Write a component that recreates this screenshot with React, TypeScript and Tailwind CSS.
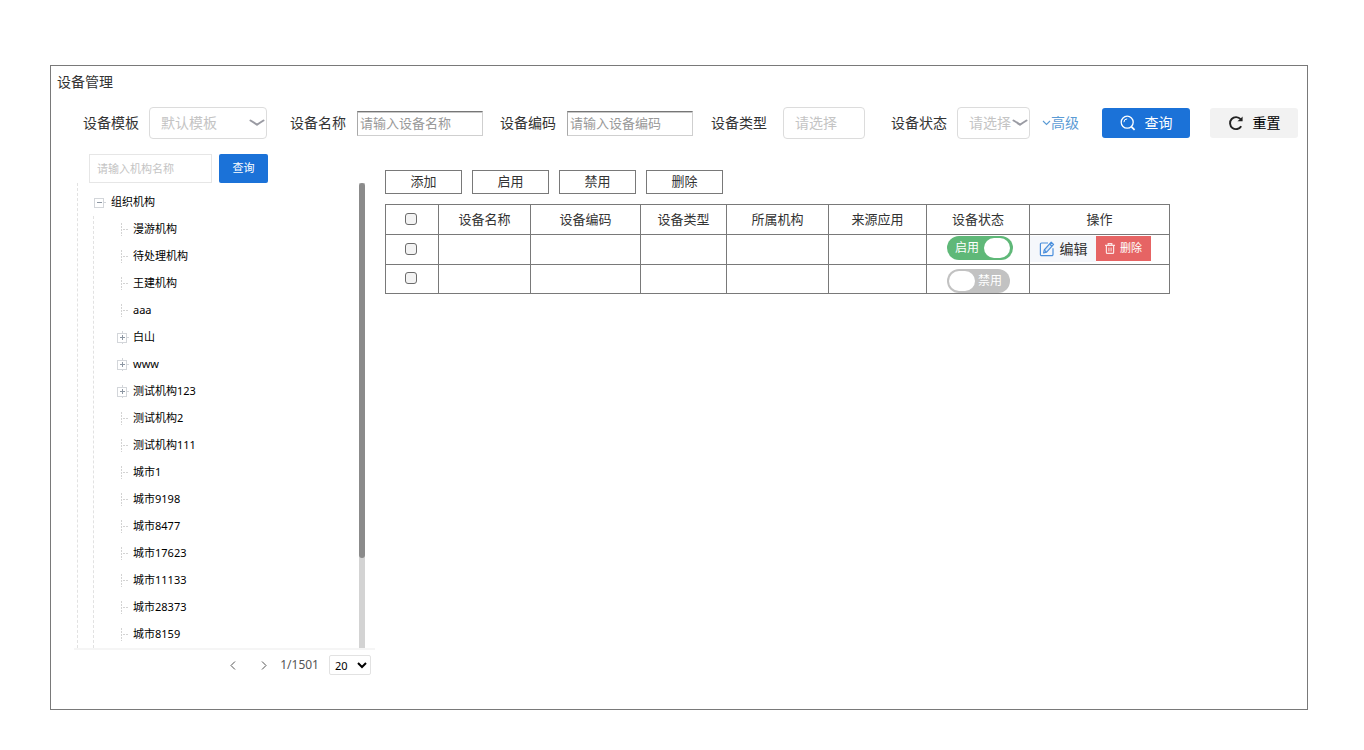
import { useState } from 'react'

type Org = { name: string; expandable?: boolean }

const orgs: Org[] = [
  { name: '漫游机构' },
  { name: '待处理机构' },
  { name: '王建机构' },
  { name: 'aaa' },
  { name: '白山', expandable: true },
  { name: 'www', expandable: true },
  { name: '测试机构123', expandable: true },
  { name: '测试机构2' },
  { name: '测试机构111' },
  { name: '城市1' },
  { name: '城市9198' },
  { name: '城市8477' },
  { name: '城市17623' },
  { name: '城市11133' },
  { name: '城市28373' },
  { name: '城市8159' },
]

const columns = ['设备名称', '设备编码', '设备类型', '所属机构', '来源应用', '设备状态', '操作']

function SelectArrow() {
  return (
    <svg
      className="pointer-events-none absolute right-[2px] top-[12px]"
      width="16"
      height="8"
      viewBox="0 0 16 8"
      fill="none"
      stroke="#9a9ba3"
      strokeWidth="2"
      strokeLinecap="round"
      strokeLinejoin="round"
    >
      <path d="M1.5 1.5 Q5 3.6 8 5.8 Q11 3.6 14.5 1.5" />
    </svg>
  )
}

function SearchIcon() {
  return (
    <svg width="16" height="16" viewBox="0 0 16 16" fill="none" stroke="currentColor" strokeWidth="1.3">
      <circle cx="7.2" cy="7.2" r="6" />
      <path d="M3.9 7.2a3.3 3.3 0 0 1 3.3-3.3" strokeWidth="1" />
      <path d="M11.5 11.8 14.6 14.8" strokeWidth="1.8" />
    </svg>
  )
}

function ResetIcon() {
  return (
    <svg width="16" height="16" viewBox="0 0 16 16" fill="none" stroke="#222" strokeWidth="1.9">
      <path d="M13.2 11.2A6 6 0 1 1 12.6 4.2" />
      <path d="M14.6 1.4V6.2H9.4L11.6 4.6Z" fill="#222" stroke="none" />
    </svg>
  )
}

function EditIcon() {
  return (
    <svg width="16" height="16" viewBox="0 0 16 16" fill="none" stroke="#4b8fdc" strokeWidth="1.2" strokeLinejoin="round">
      <path d="M9 2H2.6A1.2 1.2 0 0 0 1.4 3.2v10.2a1.2 1.2 0 0 0 1.2 1.2h10.2a1.2 1.2 0 0 0 1.2-1.2V7.2" />
      <path d="M12.2 1.2 14.6 3.4 7.6 11.2 4.6 12 5.2 9Z" fill="#dbe9f9" />
      <path d="M10.6 3 13 5.2M5.4 9.2 7.4 11" />
    </svg>
  )
}

function TrashIcon() {
  return (
    <svg width="10" height="11" viewBox="0 0 10 11" fill="none" stroke="#fbe3e3" strokeWidth="1.2">
      <path d="M0 2.4H10M3.2 2.2V.6H6.8V2.2" />
      <path d="M1.4 2.6V9.4a.9.9 0 0 0 .9.9H7.7a.9.9 0 0 0 .9-.9V2.6" />
      <path d="M3.9 4.6V8.4M6.1 4.6V8.4" strokeWidth="1" />
    </svg>
  )
}

function NodeMark({ sign }: { sign: 'plus' | 'minus' | 'leaf' }) {
  if (sign === 'leaf') {
    return (
      <svg width="12" height="14" viewBox="0 0 12 14" stroke="#d3d3d3" fill="none">
        <path d="M4.5 0V13" strokeDasharray="2 1" />
        <path d="M6 6.5H11" strokeDasharray="2 1" />
      </svg>
    )
  }
  return (
    <svg width="12" height="14" viewBox="0 0 12 14" stroke="#d3d6da" fill="none">
      {sign === 'plus' && <path d="M5.5 0V2M5.5 12V13" />}
      <path d="M10 6.5H12" />
      <rect x="0.5" y="2.5" width="9" height="9" fill="#fff" />
      <path d="M3 6.5H8" stroke="#8d97a3" />
      {sign === 'plus' && <path d="M5.5 4V9" stroke="#8d97a3" />}
    </svg>
  )
}

function Toggle({ initial }: { initial: boolean }) {
  const [on, setOn] = useState(initial)
  return (
    <button
      type="button"
      role="switch"
      aria-checked={on}
      onClick={() => setOn(!on)}
      className={`flex h-6 items-center rounded-full text-xs text-white ${
        on ? 'w-[66px] flex-row-reverse gap-[5px] bg-[#5fb878] px-[3px]' : 'w-[63px] gap-[3px] bg-[#c2c2c2] px-[2px]'
      }`}
    >
      <span className="h-5 w-[26px] rounded-full bg-white" />
      <span>{on ? '启用' : '禁用'}</span>
    </button>
  )
}

function Check({ label }: { label: string }) {
  return (
    <input
      type="checkbox"
      aria-label={label}
      className="mx-auto block h-3 w-3 appearance-none rounded-[3px] border border-[#6b6b6b] bg-[#f3f3f3] checked:bg-[#1b72d8]"
    />
  )
}

function Filters() {
  const textBox =
    'ml-[11px] h-[25px] w-[126px] border border-[#cfcfcf] border-t-[#767676] border-l-[#a9a9a9] px-[2px] text-[13px] shadow-[inset_0_1px_0_#c8c8c8] placeholder:text-[#999]'
  return (
    <form className="flex h-8 items-center pl-8 pr-[9px] text-sm whitespace-nowrap" onSubmit={(e) => e.preventDefault()}>
      <label htmlFor="template">设备模板</label>
      <div className="relative ml-[10px] w-[118px]">
        <select
          id="template"
          className="h-8 w-full appearance-none rounded border border-[#dcdcdc] bg-white pl-[11px] text-[#c4c4c4]"
        >
          <option>默认模板</option>
        </select>
        <SelectArrow />
      </div>

      <label htmlFor="name" className="ml-[23px]">
        设备名称
      </label>
      <input id="name" placeholder="请输入设备名称" className={textBox} />

      <label htmlFor="code" className="ml-[17px]">
        设备编码
      </label>
      <input id="code" placeholder="请输入设备编码" className={textBox} />

      <label htmlFor="type" className="ml-[18px]">
        设备类型
      </label>
      <input
        id="type"
        placeholder="请选择"
        className="ml-4 h-8 w-[82px] rounded border border-[#dcdcdc] px-[11px] pb-[2px] placeholder:text-[#c4c4c4]"
      />

      <label htmlFor="status" className="ml-[26px]">
        设备状态
      </label>
      <div className="relative ml-[10px] w-[73px]">
        <select
          id="status"
          className="h-8 w-full appearance-none rounded border border-[#dcdcdc] bg-white pl-[11px] text-[#c4c4c4]"
        >
          <option>请选择</option>
        </select>
        <SelectArrow />
      </div>

      <a href="#advanced" className="ml-3 flex items-center text-[#5b9bd5]">
        <svg width="9" height="6" viewBox="0 0 9 6" fill="none" stroke="currentColor" strokeWidth="1.1">
          <path d="M1 1 4.5 4.5 8 1" />
        </svg>
        高级
      </a>

      <button
        type="submit"
        className="ml-auto flex h-[30px] w-[88px] items-center justify-center gap-[9px] rounded-[3px] bg-[#1b72d8] text-white"
      >
        <SearchIcon />
        查询
      </button>
      <button
        type="reset"
        className="ml-5 flex h-[30px] w-[88px] items-center justify-center gap-[9px] rounded-[3px] bg-[#f2f2f2] text-black"
      >
        <ResetIcon />
        重置
      </button>
    </form>
  )
}

function OrgTree() {
  return (
    <aside className="w-[301px] shrink-0 text-[11px] text-black">
      <div className="flex gap-[7px] pl-[15px]">
        <input
          aria-label="机构名称"
          placeholder="请输入机构名称"
          className="h-[29px] w-[123px] border border-[#e6e6e6] px-[7px] placeholder:text-[#c4c4c4]"
        />
        <button type="button" className="h-[29px] w-[49px] rounded-[2px] bg-[#1b72d8] text-white">
          查询
        </button>
      </div>

      <div className="flex justify-between border-b-2 border-[#f5f5f5] pl-[3px] pr-[10px]">
        <ul className="border-l border-dashed border-[#e2e2e2] pt-[6px] pl-4">
          <li>
            <div className="flex h-[27px] items-center gap-[5px]">
              <NodeMark sign="minus" />
              组织机构
            </div>
            <ul className="-ml-px border-l border-dashed border-[#e2e2e2] pl-[23px]">
              {orgs.map((org) => (
                <li key={org.name} className="flex h-[27px] items-center gap-1">
                  <NodeMark sign={org.expandable ? 'plus' : 'leaf'} />
                  {org.name}
                </li>
              ))}
            </ul>
          </li>
        </ul>
        <div className="w-[6px] bg-[#d3d3d3]">
          <div className="h-[375px] rounded-[3px] bg-[#8b8b8b]" />
        </div>
      </div>

      <div className="flex h-[30px] items-center justify-end pr-1 text-xs text-[#555]">
        <button type="button" aria-label="上一页" className="mr-[25px]">
          <svg width="6" height="9" viewBox="0 0 6 9" fill="none" stroke="currentColor">
            <path d="M5 .5 1 4.5 5 8.5" />
          </svg>
        </button>
        <button type="button" aria-label="下一页" className="mr-[13px]">
          <svg width="6" height="9" viewBox="0 0 6 9" fill="none" stroke="currentColor">
            <path d="M1 .5 5 4.5 1 8.5" />
          </svg>
        </button>
        <span className="mr-[10px]">1/1501</span>
        <select aria-label="每页条数" className="h-5 w-[42px] rounded-[2px] border border-[#e2e2e2] bg-white pl-[1px] text-[11px] text-black">
          <option>20</option>
          <option>50</option>
        </select>
      </div>
    </aside>
  )
}

function DeviceTable() {
  const cell = 'border border-[#797979]'
  const checkCell = 'border border-[#797979] pr-[2px] pb-[2px]'
  return (
    <table className="mt-[10px] w-full max-w-[785px] table-fixed border-collapse text-[13px]">
      <colgroup>
        <col className="w-[53px]" />
        <col className="w-[92px]" />
        <col className="w-[110px]" />
        <col className="w-[86px]" />
        <col className="w-[102px]" />
        <col className="w-[98px]" />
        <col className="w-[103px]" />
        <col className="w-[140px]" />
      </colgroup>
      <thead>
        <tr className="h-[30px]">
          <th className={checkCell}>
            <Check label="全选" />
          </th>
          {columns.map((c) => (
            <th key={c} className={`${cell} font-normal`}>
              {c}
            </th>
          ))}
        </tr>
      </thead>
      <tbody>
        <tr className="h-[30px]">
          <td className={checkCell}>
            <Check label="选择第1行" />
          </td>
          <td className={cell} />
          <td className={cell} />
          <td className={cell} />
          <td className={cell} />
          <td className={cell} />
          <td className={`${cell} pt-[1px] pl-5 align-top`}>
            <Toggle initial={true} />
          </td>
          <td className={`${cell} pt-[1px] align-top`}>
            <div className="flex">
              <button type="button" className="flex h-[26px] w-[66px] items-center justify-center gap-[5px] bg-[#f5f7fb] text-sm">
                <EditIcon />
                编辑
              </button>
              <button
                type="button"
                className="flex h-[25px] w-[55px] items-center justify-center gap-[5px] bg-[#e66464] text-[11px] text-white"
              >
                <TrashIcon />
                删除
              </button>
            </div>
          </td>
        </tr>
        <tr className="h-[29px]">
          <td className={checkCell}>
            <Check label="选择第2行" />
          </td>
          <td className={cell} />
          <td className={cell} />
          <td className={cell} />
          <td className={cell} />
          <td className={cell} />
          <td className={`${cell} pl-5 align-bottom`}>
            <Toggle initial={false} />
          </td>
          <td className={cell} />
        </tr>
      </tbody>
    </table>
  )
}

export default function App() {
  return (
    <div className="bg-white pt-[65px] pr-14 pb-10 pl-[50px] font-['Noto_Sans','Noto_Sans_CJK_SC',sans-serif] text-[#333]">
      <main className="border border-[#797979] pb-[29px]">
        <h1 className="pl-[6px] text-sm leading-8">设备管理</h1>
        <div className="pt-[9px]">
          <Filters />
        </div>
        <div className="flex gap-[10px] pt-[15px] pl-[23px]">
          <OrgTree />
          <section className="min-w-0 flex-1 pt-4">
            <div className="flex gap-[10px] text-[13px]">
              {['添加', '启用', '禁用', '删除'].map((t) => (
                <button key={t} type="button" className="h-6 w-[77px] border border-[#797979]">
                  {t}
                </button>
              ))}
            </div>
            <DeviceTable />
          </section>
        </div>
      </main>
    </div>
  )
}
